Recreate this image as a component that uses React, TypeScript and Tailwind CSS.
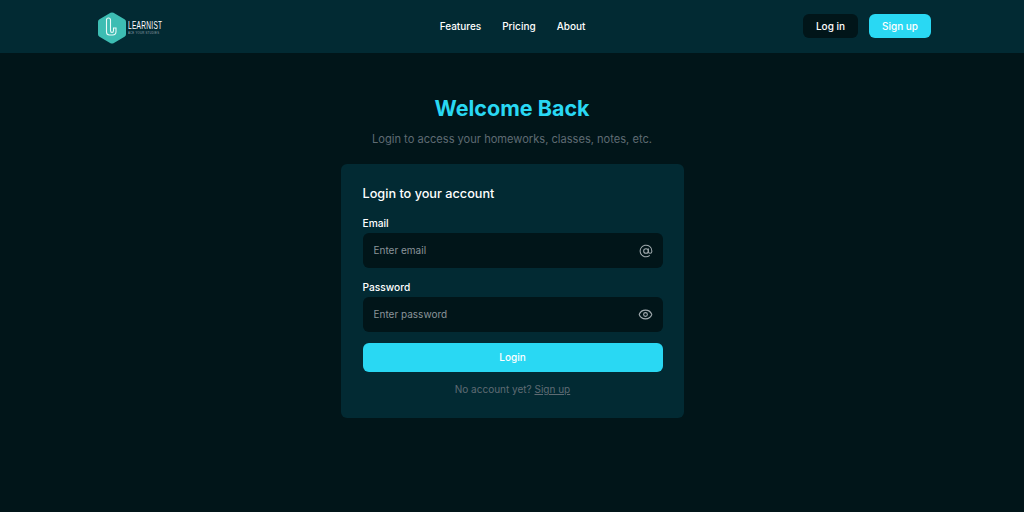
import { AtSign, Eye } from "lucide-react";

const font = { fontFamily: "Inter, sans-serif" };

const Logo = () => (
    <div className="mt-[3px] flex items-center gap-[2px]">
        <svg width="28" height="32" viewBox="0 0 28 32">
            <path d="M12.5 0.8 Q14 0 15.5 0.8 L26.5 7.2 Q28 8 28 9.8 L28 22.2 Q28 24 26.5 24.8 L15.5 31.2 Q14 32 12.5 31.2 L1.5 24.8 Q0 24 0 22.2 L0 9.8 Q0 8 1.5 7.2 Z" fill="#3dbdb3" />
            <path d="M8.5 8 Q8.5 6 10.5 6 Q12.5 6 12.5 8 L12.5 18.5 Q12.5 20.5 14 20.5 Q15.5 20.5 15.5 18.5 L15.5 16 L18 16 L18 19.5 Q18 23 14.5 23 L11.5 23 Q8.5 23 8.5 20 Z" fill="none" stroke="#eafaf8" strokeWidth="1.1" />
        </svg>
        <div className="flex flex-col">
            <span className="origin-left scale-x-[0.57] font-['Liberation_Sans',sans-serif] text-[11.5px] leading-[10px] tracking-[0.5px] text-white">LEARNIST</span>
            <span className="mt-[1px] origin-left scale-x-[0.8] font-['Liberation_Sans',sans-serif] text-[3.5px] leading-[4px] tracking-[0.3px] text-gray-400">ACE YOUR STUDIES</span>
        </div>
    </div>
);

const Field = ({ label, placeholder, icon }: { label: string; placeholder: string; icon: React.ReactNode }) => (
    <div>
        <p className="text-[10.2px] leading-[16px] font-medium text-white">{label}</p>
        <div className="mt-[2px] flex h-[35px] items-center justify-between rounded-md bg-[#011519] pl-[11px] pr-[10px]">
            <span className="text-[10px] text-[#8b9499]">{placeholder}</span>
            {icon}
        </div>
    </div>
);

export default function App() {
    return (
        <div style={font} className="flex h-[512px] w-[1024px] flex-col overflow-hidden bg-[#011519]">
            <header className="flex h-[53px] items-center bg-[#022a33] pb-[1px] pl-[98px] pr-[93px]">
                <div className="flex flex-1">
                    <Logo />
                </div>
                <nav className="flex gap-[21px] pr-[4px] text-[10px] font-medium text-white">
                    <a>Features</a>
                    <a>Pricing</a>
                    <a>About</a>
                </nav>
                <div className="flex flex-1 items-center justify-end gap-[11px] text-[10px] font-medium text-white">
                    <button className="h-[24px] w-[55px] rounded-md bg-[#011519]">Log in</button>
                    <button className="h-[24px] w-[62px] rounded-md bg-[#29d8f3]">Sign up</button>
                </div>
            </header>

            <main className="flex flex-col items-center">
                <h1 className="mt-[40px] text-[21.5px] leading-[30px] font-bold text-[#29d8f3]">Welcome Back</h1>
                <p className="mt-[7px] text-[11.1px] leading-[18px] text-[#5f6b73]">Login to access your homeworks, classes, notes, etc.</p>
                <div className="mt-[16px] h-[254px] w-[343px] rounded-md bg-[#022a33] pt-[21px] pl-[22px] pr-[21px]">
                    <h2 className="text-[12.7px] leading-[18px] font-medium text-white">Login to your account</h2>
                    <div className="mt-[12px] flex flex-col gap-[11px]">
                        <Field label="Email" placeholder="Enter email" icon={<AtSign size={14} strokeWidth={1.75} className="text-[#a3acb0]" />} />
                        <Field label="Password" placeholder="Enter password" icon={<Eye size={15} strokeWidth={1.75} className="text-[#a3acb0]" />} />
                    </div>
                    <button className="mt-[11px] h-[29px] w-full rounded-md bg-[#29d8f3] text-[10px] font-medium text-white">Login</button>
                    <p className="mt-[9px] text-center text-[10px] leading-[16px] text-[#5f6b73]">
                        No account yet? <span className="underline">Sign up</span>
                    </p>
                </div>
            </main>
        </div>
    );
}
